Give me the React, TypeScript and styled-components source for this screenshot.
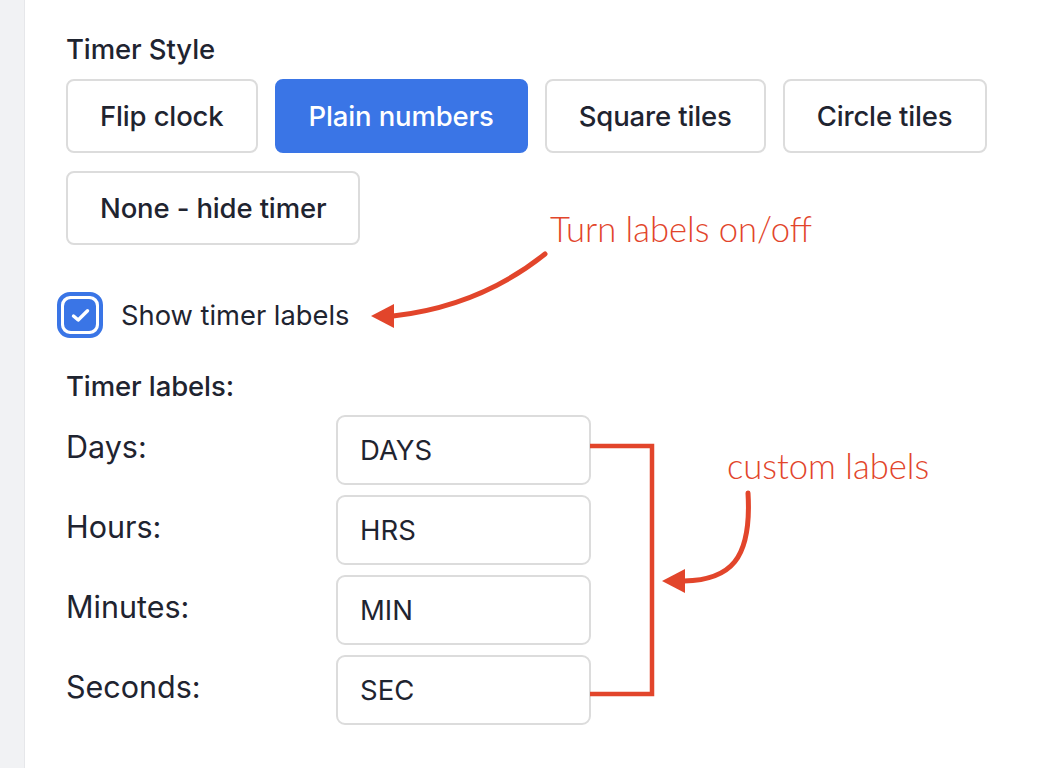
import React from 'react'
import styled, { createGlobalStyle } from 'styled-components'

const GlobalStyle = createGlobalStyle`
  html, body {
    margin: 0;
    padding: 0;
    background: #fff;
  }
  body {
    font-family: Inter, "Noto Sans", "Liberation Sans", sans-serif;
    color: #1f2430;
  }
`

const Page = styled.div`
  position: relative;
  width: 1040px;
  height: 768px;
  display: flex;
  overflow: hidden;
`

const Sidebar = styled.div`
  width: 24px;
  flex: none;
  background: #f1f2f4;
  border-right: 1px solid #e6e7ea;
`

const Panel = styled.div`
  flex: 1;
  padding: 32px 0 0 41px;
  display: flex;
  flex-direction: column;
`

const Heading = styled.div`
  font-size: 27.5px;
  font-weight: 500;
  line-height: 34px;
  letter-spacing: -0.1px;
`

const ButtonGrid = styled.div`
  display: flex;
  flex-wrap: wrap;
  gap: 18px 17px;
  width: 950px;
  margin-top: 13px;
`

const StyleButton = styled.button<{ $active?: boolean }>`
  height: 74px;
  padding: 0 32px;
  border-radius: 8px;
  border: 2px solid ${p => (p.$active ? '#3a75e6' : '#dcdcdc')};
  background: ${p => (p.$active ? '#3a75e6' : '#fff')};
  color: ${p => (p.$active ? '#fff' : '#1f2430')};
  font-family: inherit;
  font-size: 27.5px;
  font-weight: 500;
  letter-spacing: -0.15px;
  cursor: pointer;
`

const CheckRow = styled.label`
  display: flex;
  align-items: center;
  gap: 18px;
  margin: 47px 0 0 -9px;
  font-size: 27.3px;
`

const CheckOuter = styled.span`
  width: 46px;
  height: 46px;
  box-sizing: border-box;
  border: 4px solid #3a75e6;
  border-radius: 13px;
  padding: 3px;
  display: flex;
`

const CheckInner = styled.span`
  flex: 1;
  background: #3a75e6;
  border-radius: 7px;
  display: flex;
  align-items: center;
  justify-content: center;
`

const SubHeading = styled(Heading)`
  margin-top: 31px;
`

const LabelGrid = styled.div`
  display: grid;
  grid-template-columns: 270px 255px;
  row-gap: 10px;
  margin-top: 12px;
`

const FieldLabel = styled.div`
  font-size: 30.5px;
  line-height: 36px;
  align-self: start;
  padding-top: 14px;
`

const TextInput = styled.input`
  height: 70px;
  box-sizing: border-box;
  border: 2px solid #dcdcdc;
  border-radius: 9px;
  padding: 0 22px;
  font-family: inherit;
  font-size: 27.5px;
  color: #1f2430;
  outline: none;
`

const Overlay = styled.svg`
  position: absolute;
  inset: 0;
  pointer-events: none;
`

const Note = styled.div<{ $x: number; $y: number }>`
  position: absolute;
  left: ${p => p.$x}px;
  top: ${p => p.$y}px;
  font-family: Lato, "Noto Sans", sans-serif;
  font-weight: 300;
  font-size: 34.6px;
  line-height: 40px;
  color: #e2452b;
  white-space: nowrap;
`

const styles = ['Flip clock', 'Plain numbers', 'Square tiles', 'Circle tiles', 'None - hide timer']

const fields = [
  { label: 'Days:', value: 'DAYS' },
  { label: 'Hours:', value: 'HRS' },
  { label: 'Minutes:', value: 'MIN' },
  { label: 'Seconds:', value: 'SEC' },
]

const RED = '#e2452b'

export default function App() {
  return (
    <Page>
      <GlobalStyle />
      <Sidebar />
      <Panel>
        <Heading>Timer Style</Heading>
        <ButtonGrid>
          {styles.map(s => (
            <StyleButton key={s} $active={s === 'Plain numbers'}>
              {s}
            </StyleButton>
          ))}
        </ButtonGrid>

        <CheckRow>
          <CheckOuter>
            <CheckInner>
              <svg width="19" height="15" viewBox="0 0 19 15">
                <path d="M2.5 8 L7.2 12 L16.5 2.8" fill="none" stroke="#fff" strokeWidth="3.4" strokeLinecap="round" strokeLinejoin="round" />
              </svg>
            </CheckInner>
          </CheckOuter>
          Show timer labels
        </CheckRow>

        <SubHeading>Timer labels:</SubHeading>
        <LabelGrid>
          {fields.map(f => (
            <React.Fragment key={f.label}>
              <FieldLabel>{f.label}</FieldLabel>
              <TextInput defaultValue={f.value} />
            </React.Fragment>
          ))}
        </LabelGrid>
      </Panel>

      <Note $x={550} $y={209}>Turn labels on/off</Note>
      <Note $x={727} $y={446}>custom labels</Note>

      <Overlay width="1040" height="768" viewBox="0 0 1040 768">
        <path d="M545 254 Q 480 306 393 316" fill="none" stroke={RED} strokeWidth="5" strokeLinecap="round" />
        <polygon points="371,316 394,304 394,328" fill={RED} />
        <path d="M590 446 H652 V694 H590" fill="none" stroke={RED} strokeWidth="4.5" />
        <path d="M748 493 C 752 560 730 580 684 581" fill="none" stroke={RED} strokeWidth="5" strokeLinecap="round" />
        <polygon points="662,581 685,569 685,593" fill={RED} />
      </Overlay>
    </Page>
  )
}
